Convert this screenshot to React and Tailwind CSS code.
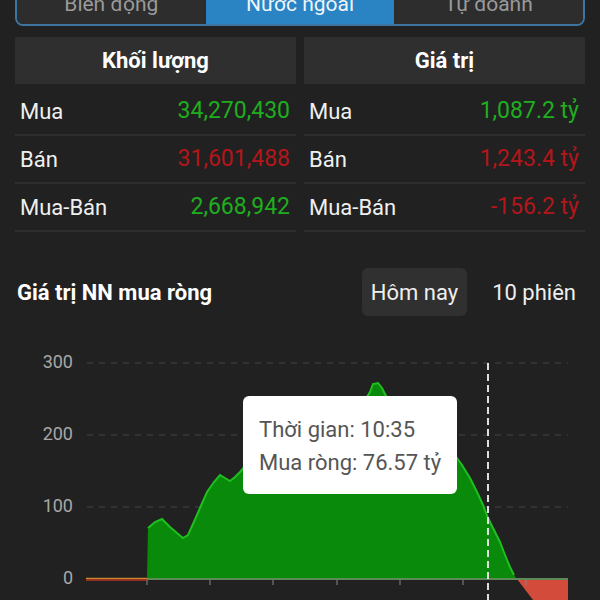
import React from "react";

const areaPts = [
  [147, 579], [148, 528], [155, 522], [162, 519], [170, 527], [177, 533], [183, 538], [188, 535],
  [193, 524], [200, 508], [207, 492], [214, 482], [220, 475], [225, 478], [230, 481], [235, 477],
  [240, 472], [245, 466], [250, 462], [270, 452], [300, 440], [320, 428], [340, 415], [355, 405],
  [365, 400], [370, 392], [373, 384], [378, 383], [382, 388], [386, 396], [400, 405], [430, 425],
  [450, 448], [457, 458], [462, 465], [470, 478], [477, 492], [483, 505], [488, 518], [494, 530],
  [500, 542], [505, 555], [510, 567], [514, 575], [517, 579],
];

const areaD = "M" + areaPts.map((p) => p.join(",")).join(" L") + " Z";
const lineD = "M" + areaPts.slice(1, -1).map((p) => p.join(",")).join(" L");

function Row({ label, value, color }) {
  return (
    <div className="h-[48px] border-b-2 border-[#2d2d2d] flex items-center justify-between pl-[5px] pr-[6px] text-[22px]">
      <span className="text-[#f0f0f0]">{label}</span>
      <span className={color + " text-[23px]"}>{value}</span>
    </div>
  );
}

export default function App() {
  const green = "text-[#1fae1f]";
  const red = "text-[#b3161a]";
  return (
    <div className="w-[600px] h-[600px] overflow-hidden bg-[#212121] font-['Roboto','Liberation_Sans',sans-serif]">
      <div className="mx-[15px] -mt-[17px] h-[43px] flex border-2 border-[#3c75a0] rounded-[8px] overflow-hidden text-[21px]">
        <div className="flex-1 bg-[#2d2d2d] flex items-center justify-center text-[#9a9a9a]">Biến động</div>
        <div className="flex-1 bg-[#2a84c4] flex items-center justify-center text-[#eef4fa]">Nước ngoài</div>
        <div className="flex-1 bg-[#2d2d2d] flex items-center justify-center text-[#9a9a9a]">Tự doanh</div>
      </div>

      <div className="mx-[15px] mt-[11px] grid grid-cols-2 gap-x-2">
        <div className="flex flex-col">
          <div className="h-[47px] bg-[#2f2f2f] flex items-center justify-center text-[22px] font-bold text-white">Khối lượng</div>
          <div className="mt-[4px]">
            <Row label="Mua" value="34,270,430" color={green} />
            <Row label="Bán" value="31,601,488" color={red} />
            <Row label="Mua-Bán" value="2,668,942" color={green} />
          </div>
        </div>
        <div className="flex flex-col">
          <div className="h-[47px] bg-[#2f2f2f] flex items-center justify-center text-[22px] font-bold text-white">Giá trị</div>
          <div className="mt-[4px]">
            <Row label="Mua" value="1,087.2 tỷ" color={green} />
            <Row label="Bán" value="1,243.4 tỷ" color={red} />
            <Row label="Mua-Bán" value="-156.2 tỷ" color={red} />
          </div>
        </div>
      </div>

      <div className="mx-[15px] mt-[36px] flex items-center justify-between">
        <div className="pl-[2px] text-[22px] font-bold text-white">Giá trị NN mua ròng</div>
        <div className="flex items-center gap-4 text-[22px] text-[#eeeeee]">
          <div className="h-[48px] px-[9px] rounded-[6px] bg-[#303030] flex items-center">Hôm nay</div>
          <div className="h-[48px] px-[9px] flex items-center">10 phiên</div>
        </div>
      </div>

      <div className="relative h-[284px]">
        <svg width="600" height="284" viewBox="0 316 600 284" className="block">
          {[363, 435, 507].map((y) => (
            <line key={y} x1="87" x2="568" y1={y} y2={y} stroke="#3a3a3a" strokeWidth="1.5" strokeDasharray="6 6" />
          ))}
          {[["300", 363], ["200", 435], ["100", 507], ["0", 579]].map(([t, y]) => (
            <text key={t} x="73" y={y} textAnchor="end" dominantBaseline="middle" fontSize="18" fill="#a8a8a8" fontFamily="Roboto, sans-serif">{t}</text>
          ))}
          <path d={areaD} fill="#0a8a0a" />
          <path d={lineD} fill="none" stroke="#1fbf1f" strokeWidth="2" />
          <path d="M517,579 L568,579 L568,600 L533,600 Z" fill="#d24b3b" />
          <line x1="147" x2="568" y1="579" y2="579" stroke="#5e8a5a" strokeWidth="2" />
          <line x1="86" x2="147" y1="578.5" y2="578.5" stroke="#c9892e" strokeWidth="1.5" />
          <line x1="86" x2="147" y1="580" y2="580" stroke="#b6341f" strokeWidth="1.5" />
          {[147, 210, 273, 337, 400, 463, 526].map((x) => (
            <line key={x} x1={x} x2={x} y1="580" y2="585" stroke="#8a8a8a" strokeWidth="1" />
          ))}
          <line x1="488" x2="488" y1="363" y2="600" stroke="#e0e0e0" strokeWidth="2" strokeDasharray="7 4" />
        </svg>
        <div className="absolute left-[243px] top-[80px] w-[214px] h-[98px] bg-white rounded-[6px] pl-[16px] pt-[17px] text-[22px] leading-[33px] text-[#555555]">
          <div>Thời gian: 10:35</div>
          <div>Mua ròng: 76.57 tỷ</div>
        </div>
      </div>
    </div>
  );
}
